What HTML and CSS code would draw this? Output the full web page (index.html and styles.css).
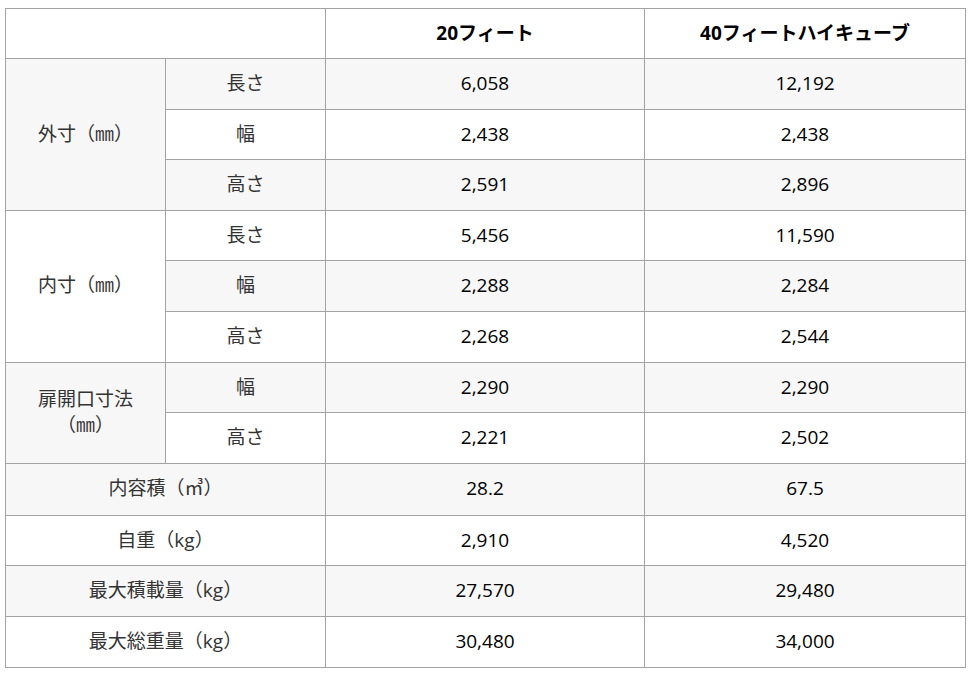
FILE: index.html
```html
<!DOCTYPE html>
<html lang="ja">
<head>
<meta charset="utf-8">
<title>コンテナ寸法</title>
<link rel="stylesheet" href="styles.css">
</head>
<body>
<table class="spec">
  <colgroup>
    <col class="c1"><col class="c2"><col class="c3"><col class="c4">
  </colgroup>
  <thead>
    <tr class="head">
      <th colspan="2"></th>
      <th>20フィート</th>
      <th>40フィートハイキューブ</th>
    </tr>
  </thead>
  <tbody>
    <tr><td rowspan="3" class="lbl">外寸（㎜）</td><td class="lbl">長さ</td><td class="num">6,058</td><td class="num">12,192</td></tr>
    <tr><td class="lbl">幅</td><td class="num">2,438</td><td class="num">2,438</td></tr>
    <tr><td class="lbl">高さ</td><td class="num">2,591</td><td class="num">2,896</td></tr>
    <tr><td rowspan="3" class="lbl">内寸（㎜）</td><td class="lbl">長さ</td><td class="num">5,456</td><td class="num">11,590</td></tr>
    <tr><td class="lbl">幅</td><td class="num">2,288</td><td class="num">2,284</td></tr>
    <tr><td class="lbl">高さ</td><td class="num">2,268</td><td class="num">2,544</td></tr>
    <tr><td rowspan="2" class="lbl two">扉開口寸法<br>（㎜）</td><td class="lbl">幅</td><td class="num">2,290</td><td class="num">2,290</td></tr>
    <tr><td class="lbl">高さ</td><td class="num">2,221</td><td class="num">2,502</td></tr>
    <tr class="tall"><td colspan="2" class="lbl">内容積（㎥）</td><td class="num">28.2</td><td class="num">67.5</td></tr>
    <tr><td colspan="2" class="lbl">自重（kg）</td><td class="num">2,910</td><td class="num">4,520</td></tr>
    <tr><td colspan="2" class="lbl">最大積載量（kg）</td><td class="num">27,570</td><td class="num">29,480</td></tr>
    <tr><td colspan="2" class="lbl">最大総重量（kg）</td><td class="num">30,480</td><td class="num">34,000</td></tr>
  </tbody>
</table>
</body>
</html>
```
FILE: styles.css
```css
html, body {
  margin: 0;
  background: #fff;
}
body {
  padding: 8px 5px;
  font-family: "Open Sans", "Noto Sans CJK JP", sans-serif;
  font-size: 19px;
  color: #333;
}
.spec {
  border-collapse: collapse;
  table-layout: fixed;
  width: 960px;
}
.c1 { width: 160px; }
.c2 { width: 160px; }
.c3 { width: 319px; }
.c4 { width: 321px; }
.spec th,
.spec td {
  border: 1px solid #a3a3a3;
  text-align: center;
  vertical-align: middle;
  padding: 0 8px;
  line-height: 1.35;
}
.spec th {
  height: 49px;
  font-weight: 700;
  color: #000;
  background: #fff;
}
.spec td {
  height: 49.6px;
}
.spec tbody tr:nth-child(odd) {
  background: #f7f7f7;
}
.spec tbody tr:nth-child(even) {
  background: #fff;
}
.spec .tall td {
  height: 51px;
}
.num {
  color: #000;
  font-weight: 500;
  padding-top: 2px;
}
.lbl {
  color: #333;
}
```
